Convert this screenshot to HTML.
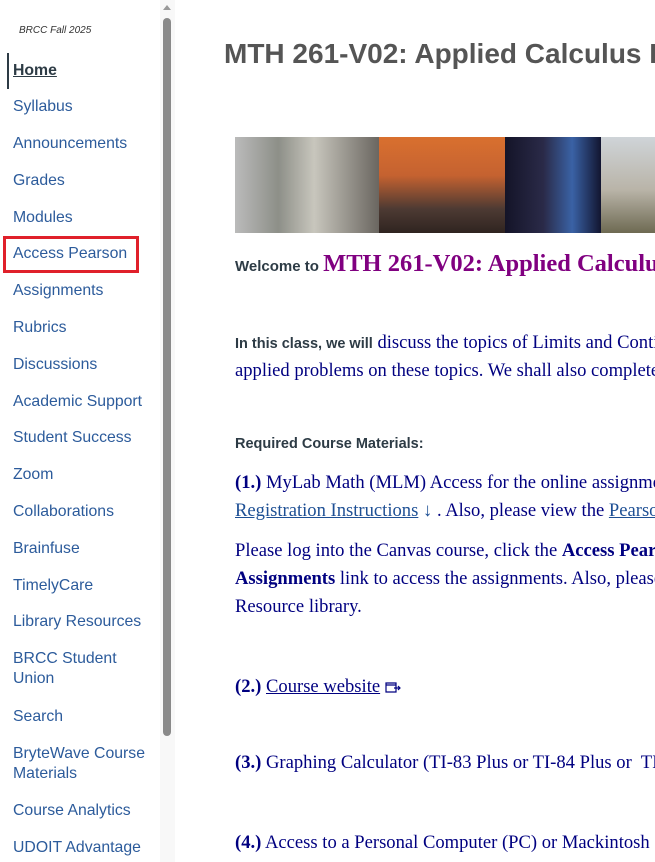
<!DOCTYPE html>
<html><head><meta charset="utf-8"><style>
*{margin:0;padding:0;box-sizing:border-box}
body{width:655px;height:862px;overflow:hidden;background:#fff;position:relative;font-family:"Liberation Sans",sans-serif}
.n{position:absolute;left:13px;font-size:15.8px;color:#2c5b9b;line-height:20px;white-space:nowrap}
.a{position:absolute;white-space:nowrap}
.s{font-family:"Liberation Serif",serif;color:#000080;font-size:18.6px;line-height:22px}
.u{text-decoration:underline;color:#1d4f94}
</style></head><body>
<div class="a" style="left:19px;top:25px;font-size:10px;font-style:italic;color:#333">BRCC Fall 2025</div>
<div style="position:absolute;left:7px;top:53px;width:2px;height:36px;background:#2d3b45"></div>
<div class="n" style="top:61px;color:#2d3b45;font-weight:bold;text-decoration:underline">Home</div>
<div class="n" style="top:97px">Syllabus</div>
<div class="n" style="top:134px">Announcements</div>
<div class="n" style="top:171px">Grades</div>
<div class="n" style="top:208px">Modules</div>
<div style="position:absolute;left:3px;top:236px;width:136px;height:37px;border:3px solid #e0202a"></div>
<div class="n" style="top:244px">Access Pearson</div>
<div class="n" style="top:281px">Assignments</div>
<div class="n" style="top:318px">Rubrics</div>
<div class="n" style="top:355px">Discussions</div>
<div class="n" style="top:392px">Academic Support</div>
<div class="n" style="top:428px">Student Success</div>
<div class="n" style="top:465px">Zoom</div>
<div class="n" style="top:502px">Collaborations</div>
<div class="n" style="top:539px">Brainfuse</div>
<div class="n" style="top:576px">TimelyCare</div>
<div class="n" style="top:612px">Library Resources</div>
<div class="n" style="top:649px">BRCC Student<br>Union</div>
<div class="n" style="top:707px">Search</div>
<div class="n" style="top:744px">BryteWave Course<br>Materials</div>
<div class="n" style="top:801px">Course Analytics</div>
<div class="n" style="top:838px">UDOIT Advantage</div>
<div style="position:absolute;left:160px;top:0;width:15px;height:862px;background:#f8f8f8"></div>
<div style="position:absolute;left:163px;top:5px;width:0;height:0;border-left:4px solid transparent;border-right:4px solid transparent;border-bottom:5px solid #999"></div>
<div style="position:absolute;left:163px;top:18px;width:8px;height:718px;background:#8a8a8a;border-radius:4px"></div>

<div class="a" style="left:224px;top:38px;font-size:28px;font-weight:bold;color:#555">MTH 261-V02: Applied Calculus I</div>
<div style="position:absolute;left:235px;top:137px;width:420px;height:96px;display:flex">
<div style="width:144px;background:linear-gradient(90deg,#bbb 0,#8d8f88 30%,#c8c6bd 55%,#6a6660 100%)"></div>
<div style="width:126px;background:linear-gradient(180deg,#d9702f 0,#c56230 40%,#4d3a33 75%,#2f2420 100%)"></div>
<div style="width:96px;background:linear-gradient(90deg,#141428 0,#2a2a48 40%,#3a62a5 70%,#121530 100%)"></div>
<div style="width:54px;background:linear-gradient(180deg,#cfd4d8 0,#b9b4a8 55%,#6e6a52 100%)"></div>
</div>
<div class="a" style="left:235px;top:250px;font-size:15px;font-weight:bold;color:#2d3b45">Welcome to <span style="font-family:'Liberation Serif',serif;color:#800080;font-size:24.5px">MTH 261-V02: Applied Calculus I</span></div>
<div class="a s" style="left:235px;top:332px"><b style="font-family:'Liberation Sans',sans-serif;font-size:14.5px;color:#2d3b45">In this class, we will</b> discuss the topics of Limits and Continuity</div>
<div class="a s" style="left:235px;top:360px">applied problems on these topics. We shall also complete</div>
<div class="a" style="left:235px;top:436px;font-size:14.5px;font-weight:bold;color:#2d3b45">Required Course Materials:</div>
<div class="a s" style="left:235px;top:472px"><b>(1.)</b> MyLab Math (MLM) Access for the online assignments</div>
<div class="a s" style="left:235px;top:500px"><span class="u">Registration Instructions</span> <span style="color:#1d4f94">&#8595;</span> . Also, please view the <span class="u">Pearson</span></div>
<div class="a s" style="left:235px;top:540px">Please log into the Canvas course, click the <b>Access Pearson</b></div>
<div class="a s" style="left:235px;top:568px"><b>Assignments</b> link to access the assignments. Also, please</div>
<div class="a s" style="left:235px;top:596px">Resource library.</div>
<div class="a s" style="left:235px;top:676px"><b>(2.)</b> <span style="text-decoration:underline">Course website</span> <svg width="18" height="14" viewBox="0 0 18 14" style="vertical-align:-2px"><path d="M1 3h10v9H1zM1 5h10M9 8h6m-2-2 2 2-2 2" fill="none" stroke="#000080" stroke-width="1.2"/></svg></div>
<div class="a s" style="left:235px;top:752px"><b>(3.)</b> Graphing Calculator (TI-83 Plus or TI-84 Plus or&nbsp; TI-</div>
<div class="a s" style="left:235px;top:832px"><b>(4.)</b> Access to a Personal Computer (PC) or Mackintosh</div>
</body></html>
